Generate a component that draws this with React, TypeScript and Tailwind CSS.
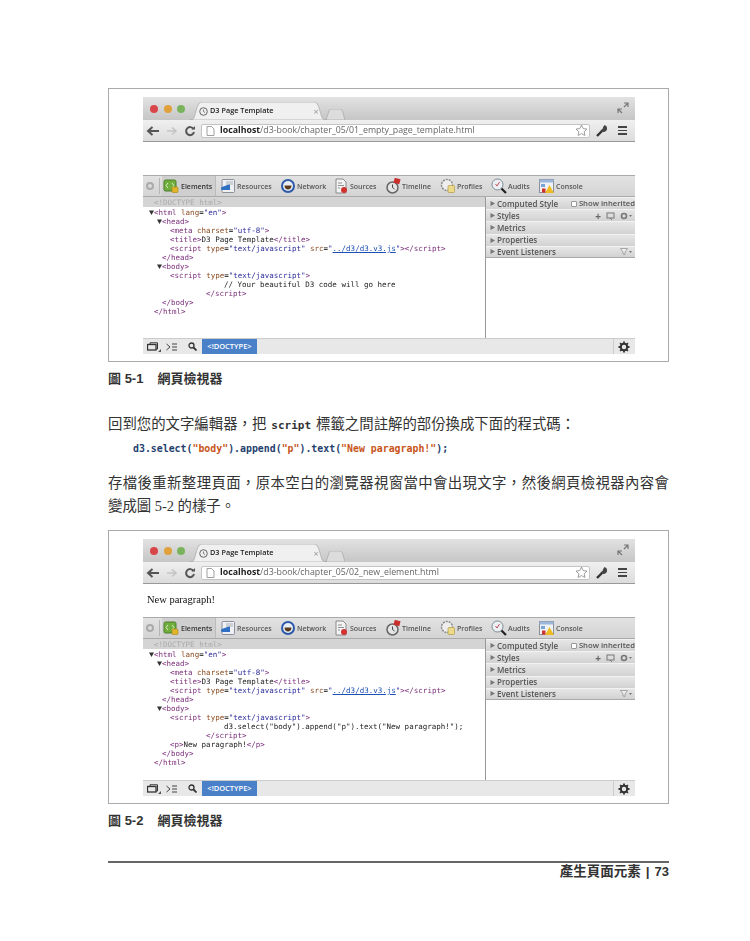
import React from 'react';

const MONO = 'font-["DejaVu_Sans_Mono",monospace]';
const SANS = 'font-["Open_Sans","Liberation_Sans",sans-serif]';
const CJK = 'font-["Liberation_Serif","Noto_Sans_CJK_TC",serif]';
const CJK_BOLD = 'font-["Liberation_Sans","Noto_Sans_CJK_TC",sans-serif]';

type Line = { indent: number; arrow?: boolean; parts: React.ReactNode };

const Tag = ({ children }: { children: React.ReactNode }) => <span className="text-[#7b2f7b]">{children}</span>;
const Attr = ({ children }: { children: React.ReactNode }) => <span className="text-[#8a4a20]">{children}</span>;
const Val = ({ children }: { children: React.ReactNode }) => <span className="text-[#2a2a9c]">{children}</span>;
const Txt = ({ children }: { children: React.ReactNode }) => <span className="text-[#222]">{children}</span>;

const headLines: Line[] = [
  { indent: 11, arrow: true, parts: <><Tag>&lt;html</Tag> <Attr>lang</Attr>=<Val>"en"</Val><Tag>&gt;</Tag></> },
  { indent: 19, arrow: true, parts: <Tag>&lt;head&gt;</Tag> },
  { indent: 27, parts: <><Tag>&lt;meta</Tag> <Attr>charset</Attr>=<Val>"utf-8"</Val><Tag>&gt;</Tag></> },
  { indent: 27, parts: <><Tag>&lt;title&gt;</Tag><Txt>D3 Page Template</Txt><Tag>&lt;/title&gt;</Tag></> },
  {
    indent: 27,
    parts: (
      <>
        <Tag>&lt;script</Tag> <Attr>type</Attr>=<Val>"text/javascript"</Val> <Attr>src</Attr>=<Val>"</Val>
        <span className="text-[#1a4fb5] underline">../d3/d3.v3.js</span>
        <Val>"</Val>
        <Tag>&gt;&lt;/script&gt;</Tag>
      </>
    ),
  },
  { indent: 19, parts: <Tag>&lt;/head&gt;</Tag> },
  { indent: 19, arrow: true, parts: <Tag>&lt;body&gt;</Tag> },
  { indent: 27, parts: <><Tag>&lt;script</Tag> <Attr>type</Attr>=<Val>"text/javascript"</Val><Tag>&gt;</Tag></> },
];

function Sprite({ children, w = 16, h = 16 }: { children: React.ReactNode; w?: number; h?: number }) {
  return (
    <svg width={w} height={h} viewBox={`0 0 ${w} ${h}`} className="shrink-0">
      {children}
    </svg>
  );
}

const ElementsIcon = () => (
  <Sprite>
    <rect x="1" y="2" width="12" height="11" rx="1.5" fill="#6fae3c" stroke="#4d7d2a" />
    <path d="M5 5L3 7.5 5 10M9 5l2 2.5L9 10" stroke="#dff0c8" strokeWidth="1" fill="none" />
    <rect x="9" y="9" width="6" height="5.5" rx="1" fill="#e0b52a" stroke="#a78416" strokeWidth=".6" />
  </Sprite>
);
const ResourcesIcon = () => (
  <Sprite>
    <rect x="2" y="1.5" width="12.5" height="13" rx="1" fill="#eef0f4" stroke="#8a8f98" />
    <path d="M1 9.5c3-1 6-3 9-3v5.500H2.500A1.500 1.500 0 0 1 1 10.500z" fill="#2f6fc4" />
    <path d="M6 4h7M6 6h7" stroke="#9aa0aa" strokeWidth=".8" />
  </Sprite>
);
const NetworkIcon = () => (
  <Sprite>
    <circle cx="8" cy="8" r="7" fill="#2c5aa8" />
    <circle cx="8" cy="8" r="5" fill="#e8edf6" />
    <path d="M4.500 7.500h7c0 2.500-1.500 4-3.500 4s-3.500-1.500-3.500-4z" fill="#5a3a1c" />
  </Sprite>
);
const SourcesIcon = () => (
  <Sprite>
    <path d="M3 1h7l3 3v11H3z" fill="#f3f3f3" stroke="#8a8a8a" />
    <path d="M5 5h4M5 7.500h6M5 10h2" stroke="#777" strokeWidth=".8" />
    <circle cx="11" cy="12" r="3" fill="#d0322e" />
  </Sprite>
);
const TimelineIcon = () => (
  <Sprite>
    <circle cx="7.500" cy="9.500" r="5.500" fill="#e4e4e4" stroke="#666" strokeWidth="1.500" />
    <path d="M7.500 6.500v3l2 1.500" stroke="#444" fill="none" />
    <rect x="9" y="0.500" width="6" height="5" fill="#c9302c" transform="rotate(15 12 3)" />
  </Sprite>
);
const ProfilesIcon = () => (
  <Sprite>
    <circle cx="7" cy="7" r="5.500" fill="#eeeeee" stroke="#8c8c8c" strokeDasharray="2 1" strokeWidth="1.500" />
    <rect x="8" y="7.500" width="6.500" height="7" rx="1" fill="#ecd98a" stroke="#b09a45" strokeWidth=".7" />
  </Sprite>
);
const AuditsIcon = () => (
  <Sprite>
    <circle cx="6.500" cy="6.500" r="5.500" fill="#eaf0f4" stroke="#7c8a90" />
    <path d="M4.500 6l1.500 2 2.500-4" stroke="#c9505a" fill="none" />
    <path d="M10.500 10.500l4.500 4.500" stroke="#222" strokeWidth="2.200" />
  </Sprite>
);
const ConsoleIcon = () => (
  <Sprite>
    <rect x="0.500" y="1.500" width="14" height="13" fill="#eef1f6" stroke="#8a8f98" />
    <rect x="0.500" y="1.500" width="14" height="3" fill="#9db7dc" />
    <rect x="2" y="6" width="4" height="3" fill="#7aa3d6" />
    <path d="M10.500 7l4.500 8H6z" fill="#eebb22" />
    <rect x="3" y="10.500" width="3.500" height="4" fill="#d0322e" />
  </Sprite>
);

const panels = [
  { label: 'Resources', icon: <ResourcesIcon />, width: 'w-[60px]' },
  { label: 'Network', icon: <NetworkIcon />, width: 'w-[53px]' },
  { label: 'Sources', icon: <SourcesIcon />, width: 'w-[52px]' },
  { label: 'Timeline', icon: <TimelineIcon />, width: 'w-[55px]' },
  { label: 'Profiles', icon: <ProfilesIcon />, width: 'w-[51px]' },
  { label: 'Audits', icon: <AuditsIcon />, width: 'w-[48px]' },
  { label: 'Console', icon: <ConsoleIcon />, width: 'w-[60px]' },
];

function Triangle({ down }: { down?: boolean }) {
  return (
    <svg width="5" height="5" viewBox="0 0 5 5" className="shrink-0">
      <path d={down ? 'M0 .5h5L2.500 5z' : 'M.5 0v5L5 2.500z'} fill={down ? '#333' : '#777'} />
    </svg>
  );
}

function SideRow({ label, children, last }: { label: string; children?: React.ReactNode; last?: boolean }) {
  return (
    <div className={`flex h-[12.2px] items-center gap-[2px] border-t border-t-[#f2f2f2] bg-gradient-to-b from-[#e6e6e6] to-[#d2d2d2] pl-[4px] pr-[3px] ${last ? 'border-b border-b-[#aaa]' : ''}`}>
      <Triangle />
      <span className={`${SANS} whitespace-nowrap text-[8px] font-semibold leading-none text-[#555]`}>{label}</span>
      {children}
    </div>
  );
}

function Figure({ url, page, domLines }: { url: string; page?: string; domLines: React.ReactNode }) {
  return (
    <div className="h-[274px] border border-[#aaa] pl-[34px] pt-[8px]">
      <div className="w-[492px] blur-[0.5px]">
        {/* tab strip */}
        <div className="flex h-[23px] items-end bg-gradient-to-b from-[#e2e2e2] to-[#c6c6c6]">
          <div className="mb-[7px] ml-[7px] flex gap-[5.500px]">
            <span className="h-[8px] w-[8px] rounded-full bg-[#d9464a]" />
            <span className="h-[8px] w-[8px] rounded-full bg-[#dfa13a]" />
            <span className="h-[8px] w-[8px] rounded-full bg-[#79b45c]" />
          </div>
          <div className="relative ml-[5px] flex h-[18px] w-[137px] items-center pl-[9px]">
            <svg width="137" height="18" viewBox="0 0 137 18" className="absolute inset-0">
              <path d="M0 18c4 0 4-2 6-9s3-9 7-9h110c4 0 5 2 7 9s2 9 7 9z" fill="#f0f0f0" stroke="#a5a5a5" strokeWidth=".7" />
            </svg>
            <svg width="9" height="9" viewBox="0 0 9 9" className="relative shrink-0">
              <circle cx="4.500" cy="4.500" r="3.800" fill="#eee" stroke="#666" />
              <path d="M4.500 2.500v2l1.500 1" stroke="#666" fill="none" strokeWidth=".8" />
            </svg>
            <span className={`${SANS} relative ml-[2px] whitespace-nowrap text-[7.300px] font-semibold leading-none text-[#222]`}>D3 Page Template</span>
            <span className={`${SANS} relative ml-[40px] text-[9px] leading-none text-[#999]`}>×</span>
          </div>
          <svg width="19" height="11" viewBox="0 0 19 11" className="-ml-[1px] shrink-0">
            <path d="M0 11L3 2c.3-1 1-2 2-2h9c1 0 2 1 2.500 2L19 11z" fill="#dcdcdc" stroke="#a8a8a8" strokeWidth=".7" />
          </svg>
          <svg width="12" height="12" viewBox="0 0 12 12" className="mb-[6px] ml-auto mr-[6px] shrink-0">
            <path d="M1 7l4 4M1 11V7h4M11 1L7 5M7 1h4v4" stroke="#777" fill="none" strokeWidth="1.200" />
          </svg>
        </div>

        {/* url bar */}
        <div className="flex h-[22px] items-center border-b border-b-[#999] bg-gradient-to-b from-[#f0f0f0] to-[#dcdcdc]">
          <svg width="14" height="10" viewBox="0 0 14 10" className="ml-[3px] shrink-0">
            <path d="M13 5H3M6.500 1L2 5l4.500 4" stroke="#555" strokeWidth="2" fill="none" />
          </svg>
          <svg width="12" height="10" viewBox="0 0 12 10" className="ml-[6px] shrink-0">
            <path d="M1 5h9M6 1.500L10 5 6 8.500" stroke="#c4c4c4" strokeWidth="1.600" fill="none" />
          </svg>
          <svg width="12" height="12" viewBox="0 0 12 12" className="ml-[6px] shrink-0">
            <path d="M9.500 4A4 4 0 1 0 10 7" stroke="#555" strokeWidth="2" fill="none" />
            <path d="M7.500 4.500h3.500V1z" fill="#555" />
          </svg>
          <div className="relative ml-[5px] flex h-[14px] w-[389px] items-center rounded-[2px] border border-[#c4c4c4] bg-white pl-[4px]">
            <svg width="9" height="10" viewBox="0 0 9 10" className="shrink-0">
              <path d="M1 .5h4.500L8 3v6.500H1z" fill="#fff" stroke="#888" strokeWidth=".8" />
            </svg>
            <span className={`${SANS} ml-[5px] whitespace-nowrap text-[8.800px] leading-none text-[#666]`}>
              <b className="font-bold text-[#222]">localhost</b>
              {url}
            </span>
            <svg width="13" height="13" viewBox="0 0 13 13" className="ml-auto mr-[1px] shrink-0">
              <path d="M6.500 1l1.700 3.600 3.800.5-2.800 2.600.7 3.800-3.400-1.900-3.400 1.900.7-3.800L1 5.100l3.800-.5z" fill="#fff" stroke="#888" strokeWidth=".8" />
            </svg>
          </div>
          <svg width="13" height="13" viewBox="0 0 13 13" className="ml-[5px] shrink-0">
            <path d="M2 12l5.500-5.500" stroke="#333" strokeWidth="2.400" />
            <path d="M8.500 1a3.500 3.500 0 1 1-3 5.200l2-1.200.8-2.200 1.400-1.700z" fill="#444" />
          </svg>
          <div className="ml-[10px] flex flex-col gap-[2px]">
            <span className="h-[1.500px] w-[9px] bg-[#444]" />
            <span className="h-[1.500px] w-[9px] bg-[#444]" />
            <span className="h-[1.500px] w-[9px] bg-[#444]" />
          </div>
        </div>

        {/* page */}
        <div className="flex h-[33px] items-center pl-[4px] font-['Liberation_Serif',serif] text-[10.500px] leading-none text-[#111]">{page}</div>

        {/* devtools toolbar */}
        <div className="flex h-[22px] items-center border-t border-t-[#aaa] border-b border-b-[#aaa] bg-gradient-to-b from-[#e2e2e2] to-[#d4d4d4]">
          <span className="ml-[3px] flex h-[8px] w-[8px] items-center justify-center rounded-full border-2 border-[#aaa]" />
          <span className="ml-[5px] h-[16px] w-px bg-[#b5b5b5]" />
          <div className="ml-[2px] flex h-[20px] w-[54px] items-center gap-[2px] border-r border-r-[#bbb] bg-[#cfcfcf] pl-[1px]">
            <ElementsIcon />
            <span className={`${SANS} text-[7px] font-semibold leading-none text-[#333]`}>Elements</span>
          </div>
          <div className="ml-[4px] flex items-center">
            {panels.map((p) => (
              <div key={p.label} className={`flex items-center gap-[1px] ${p.width}`}>
                {p.icon}
                <span className={`${SANS} text-[7px] font-semibold leading-none text-[#555]`}>{p.label}</span>
              </div>
            ))}
          </div>
        </div>

        {/* devtools panes */}
        <div className="flex h-[141px]">
          <div className={`${MONO} w-[342px] overflow-hidden text-[7.500px] leading-[9px]`}>
            <div className="mb-[1px] flex h-[10px] items-center bg-[#d4d4d4] pl-[11px] text-[#aaa]">&lt;!DOCTYPE html&gt;</div>
            {domLines}
          </div>
          <div className="w-[150px] border-l border-l-[#999]">
            <SideRow label="Computed Style">
              <span className="ml-auto h-[6px] w-[6px] rounded-[1px] border border-[#999] bg-white" />
              <span className={`${SANS} -mr-[3px] whitespace-nowrap text-[7.700px] font-semibold leading-none text-[#555]`}>Show inherited</span>
            </SideRow>
            <SideRow label="Styles">
              <span className={`${SANS} ml-auto text-[10px] font-bold leading-none text-[#666]`}>+</span>
              <svg width="9" height="8" viewBox="0 0 9 8" className="ml-[3px] shrink-0">
                <rect x="1" y="1" width="7" height="5" fill="none" stroke="#777" />
                <path d="M4 6l2 2" stroke="#777" />
              </svg>
              <svg width="12" height="8" viewBox="0 0 12 8" className="ml-[3px] shrink-0">
                <circle cx="4" cy="4" r="2.500" fill="none" stroke="#777" strokeWidth="1.600" />
                <path d="M9 3h3l-1.500 2z" fill="#777" />
              </svg>
            </SideRow>
            <SideRow label="Metrics" />
            <SideRow label="Properties" />
            <SideRow label="Event Listeners" last>
              <svg width="12" height="7" viewBox="0 0 12 7" className="ml-auto shrink-0">
                <path d="M.5.5h7L5 4v2.500L3 6V4z" fill="#eee" stroke="#888" strokeWidth=".7" />
                <path d="M9 3h3l-1.500 2z" fill="#777" />
              </svg>
            </SideRow>
          </div>
        </div>

        {/* devtools status bar */}
        <div className="flex h-[16px] items-center border-t border-t-[#ccc] bg-[#e8e8e8]">
          <svg width="14" height="10" viewBox="0 0 14 10" className="ml-[4px] shrink-0">
            <path d="M3 2V.8h7.500V7H9" stroke="#333" fill="none" />
            <rect x=".5" y="2.500" width="8.500" height="5.500" fill="none" stroke="#333" strokeWidth="1.300" />
            <path d="M11 10h3V7z" fill="#555" />
          </svg>
          <svg width="11" height="8" viewBox="0 0 11 8" className="ml-[5px] shrink-0">
            <path d="M.5 1L4 4 .5 7" stroke="#444" fill="none" />
            <path d="M6 1h5M6 4h5M6 7h5" stroke="#444" />
          </svg>
          <svg width="9" height="9" viewBox="0 0 9 9" className="ml-[11px] shrink-0">
            <circle cx="3.500" cy="3.500" r="2.500" fill="none" stroke="#333" strokeWidth="1.300" />
            <path d="M5.500 5.500L8.500 8.500" stroke="#333" strokeWidth="1.800" />
          </svg>
          <div className="ml-[5px] flex h-full w-[55px] items-center justify-center bg-[#4a80c8]">
            <span className={`${SANS} text-[7.500px] font-semibold leading-none text-white`}>&lt;!DOCTYPE&gt;</span>
          </div>
          <span className="ml-auto h-full w-px bg-[#ccc]" />
          <svg width="12" height="12" viewBox="0 0 12 12" className="ml-[4px] mr-[5px] shrink-0">
            <circle cx="6" cy="6" r="3.200" fill="none" stroke="#333" strokeWidth="2" />
            <path d="M6 .5v2M6 9.500v2M.5 6h2M9.500 6h2M2.100 2.100l1.400 1.400M8.500 8.500l1.400 1.400M2.100 9.900l1.400-1.400M8.500 3.500l1.400-1.400" stroke="#333" strokeWidth="1.800" />
          </svg>
        </div>
      </div>
    </div>
  );
}

function Dom({ children, trailing }: { children: React.ReactNode; trailing: React.ReactNode }) {
  return (
    <>
      {headLines.map((l, i) => (
        <div key={i} className="relative whitespace-nowrap" style={{ paddingLeft: l.indent }}>
          {l.arrow && (
            <span className="absolute top-[2px]" style={{ left: l.indent - 5 }}>
              <Triangle down />
            </span>
          )}
          {l.parts}
        </div>
      ))}
      {children}
      {trailing}
    </>
  );
}

function Caption({ num }: { num: string }) {
  return (
    <div className={`${CJK_BOLD} text-[13px] font-bold leading-[18px] text-[#333]`}>
      圖 {num}<span className="ml-[14px]">網頁檢視器</span>
    </div>
  );
}

export default function App() {
  const close = (
    <>
      <div className="whitespace-nowrap pl-[19px]"><Tag>&lt;/body&gt;</Tag></div>
      <div className="whitespace-nowrap pl-[11px]"><Tag>&lt;/html&gt;</Tag></div>
    </>
  );

  return (
    <div lang="zh-TW" className="h-[941px] w-[750px] overflow-hidden bg-white pl-[108px] pr-[81px] pt-[88px]">
      <Figure
        url="/d3-book/chapter_05/01_empty_page_template.html"
        domLines={
          <Dom trailing={close}>
            <div className="whitespace-nowrap pl-[81px]"><Txt>// Your beautiful D3 code will go here</Txt></div>
            <div className="whitespace-nowrap pl-[63px]"><Tag>&lt;/script&gt;</Tag></div>
          </Dom>
        }
      />
      <div className="mt-[8px]"><Caption num="5-1" /></div>

      <p className={`${CJK} mt-[26px] whitespace-nowrap text-[14.400px] leading-[20px] text-[#333]`}>
        回到您的文字編輯器，把<span className="mx-[5px] font-['DejaVu_Sans_Mono',monospace] text-[11px] font-bold text-[#333]">script</span>標籤之間註解的部份換成下面的程式碼：
      </p>
      <div className={`${MONO} mt-[4px] whitespace-nowrap pl-[25px] text-[9.900px] font-bold leading-[18px] text-[#1f3f6e]`}>
        d3.select(<span className="text-[#c8551a]">"body"</span>).append(<span className="text-[#c8551a]">"p"</span>).text(<span className="text-[#c8551a]">"New paragraph!"</span>);
      </div>

      <p className={`${CJK} mt-[14px] text-justify text-[14.400px] leading-[23px] text-[#333]`}>
        存檔後重新整理頁面，原本空白的瀏覽器視窗當中會出現文字，然後網頁檢視器內容會變成圖 5-2 的樣子。
      </p>

      <div className="mt-[12px]">
        <Figure
          url="/d3-book/chapter_05/02_new_element.html"
          page="New paragraph!"
          domLines={
            <Dom trailing={close}>
              <div className="whitespace-nowrap pl-[81px]">
                <Txt>d3.select("body").append("p").text("New paragraph!");</Txt>
              </div>
              <div className="whitespace-nowrap pl-[63px]"><Tag>&lt;/script&gt;</Tag></div>
              <div className="whitespace-nowrap pl-[27px]">
                <Tag>&lt;p&gt;</Tag><Txt>New paragraph!</Txt><Tag>&lt;/p&gt;</Tag>
              </div>
            </Dom>
          }
        />
      </div>
      <div className="mt-[8px]"><Caption num="5-2" /></div>

      <div className={`${CJK_BOLD} mt-[31px] border-t-2 border-t-[#666] pt-[1px] text-right text-[13.500px] font-bold leading-[16px] text-[#333]`}>
        產生頁面元素<span className="mx-[5px]">|</span><span className="text-[13px]">73</span>
      </div>
    </div>
  );
}
